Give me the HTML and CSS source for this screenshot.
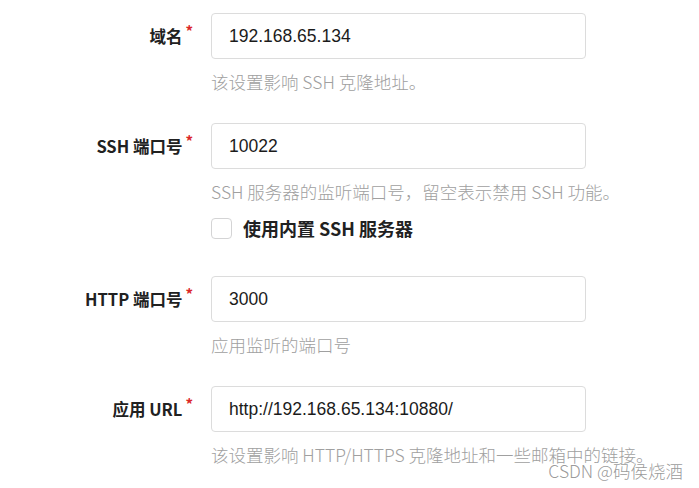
FILE: index.html
```html
<!DOCTYPE html>
<html lang="zh-CN">
<head>
<meta charset="utf-8">
<title>安装设置</title>
<link rel="stylesheet" href="styles.css">
</head>
<body>
<form class="form">
  <div class="field">
    <label class="label">域名<span class="req">*</span></label>
    <div class="control">
      <div class="input">192.168.65.134</div>
      <div class="help">该设置影响 SSH 克隆地址。</div>
    </div>
  </div>
  <div class="field">
    <label class="label">SSH 端口号<span class="req">*</span></label>
    <div class="control">
      <div class="input">10022</div>
      <div class="help">SSH 服务器的监听端口号，留空表示禁用 SSH 功能。</div>
      <div class="check">
        <span class="box"></span>
        <span class="check-label">使用内置 SSH 服务器</span>
      </div>
    </div>
  </div>
  <div class="field">
    <label class="label">HTTP 端口号<span class="req">*</span></label>
    <div class="control">
      <div class="input">3000</div>
      <div class="help">应用监听的端口号</div>
    </div>
  </div>
  <div class="field">
    <label class="label">应用 URL<span class="req">*</span></label>
    <div class="control">
      <div class="input">http://192.168.65.134:10880/</div>
      <div class="help">该设置影响 HTTP/HTTPS 克隆地址和一些邮箱中的链接。</div>
    </div>
  </div>
</form>
<div class="watermark">CSDN @码侯烧酒</div>
</body>
</html>
```
FILE: styles.css
```css
html, body {
  margin: 0;
  padding: 0;
  background: #ffffff;
}
body {
  padding-top: 13px;
  font-family: "Noto Sans CJK SC", "Noto Sans", sans-serif;
  color: #212121;
  overflow: hidden;
  height: 488px;
  box-sizing: border-box;
  position: relative;
}
.form {
  display: flex;
  flex-direction: column;
  gap: 29px;
}
.field {
  display: grid;
  grid-template-columns: 193px 1fr;
  column-gap: 18px;
  align-items: start;
}
.label {
  height: 46px;
  display: flex;
  align-items: center;
  justify-content: flex-end;
  font-size: 16.5px;
  font-weight: 700;
  line-height: 18px;
  color: #212121;
}
.req {
  color: #db2828;
  font-size: 15px;
  margin-left: 3px;
  line-height: 10px;
  margin-bottom: 10px;
}
.control {
  display: flex;
  flex-direction: column;
  align-items: flex-start;
}
.input {
  box-sizing: border-box;
  width: 375px;
  height: 46px;
  border: 1px solid #dcdcdc;
  border-radius: 4px;
  padding: 0 17px;
  display: flex;
  align-items: center;
  font-family: "Liberation Sans", Arial, sans-serif;
  font-size: 17.5px;
  color: #1b1b1b;
}
.help {
  margin-top: 11px;
  font-size: 17.5px;
  font-weight: 300;
  line-height: 24px;
  color: #a0a0a0;
  white-space: nowrap;
}
.check {
  display: flex;
  align-items: center;
  gap: 11px;
  margin-top: 14px;
  margin-bottom: 9px;
  height: 20px;
}
.box {
  box-sizing: border-box;
  width: 21px;
  height: 21px;
  border: 1px solid #d4d4d5;
  border-radius: 4px;
  background: #fff;
}
.check-label {
  font-size: 18px;
  font-weight: 700;
  line-height: 20px;
  color: #212121;
}
.watermark {
  position: absolute;
  right: 16px;
  bottom: 7px;
  font-family: "Noto Sans CJK SC", sans-serif;
  font-size: 17.5px;
  font-weight: 300;
  line-height: 20px;
  color: rgba(128, 128, 128, 0.8);
}
```
